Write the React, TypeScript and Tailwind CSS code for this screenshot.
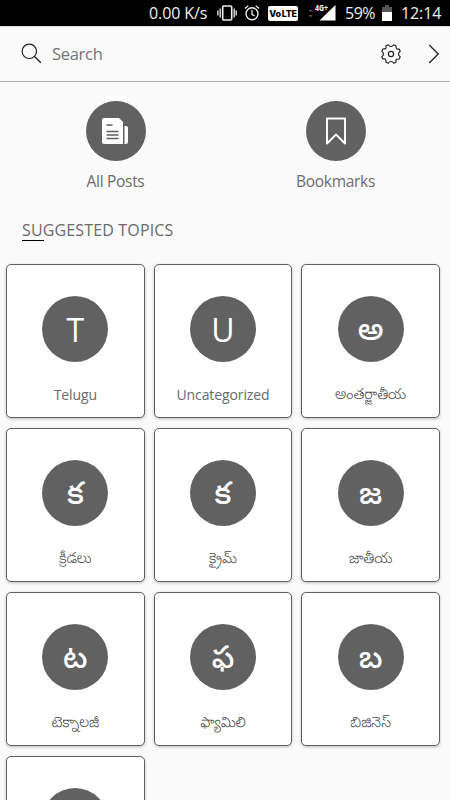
import React from "react";

const topics = [
  { letter: "T", name: "Telugu", latin: true },
  { letter: "U", name: "Uncategorized", latin: true },
  { letter: "అ", name: "అంతర్జాతీయ" },
  { letter: "క", name: "క్రీడలు" },
  { letter: "క", name: "క్రైమ్" },
  { letter: "జ", name: "జాతీయ" },
  { letter: "ట", name: "టెక్నాలజీ" },
  { letter: "ఫ", name: "ఫ్యామిలి" },
  { letter: "బ", name: "బిజినెస్" },
  { letter: "", name: "" },
];

function StatusBar() {
  return (
    <header className="flex h-[26px] shrink-0 items-center bg-black pl-[149px] text-[16px] leading-[26px] font-normal whitespace-nowrap text-[#eee]">
      <span className="w-[68px] tracking-[-0.1px]">0.00 K/s</span>
      <svg width="20" height="18" viewBox="0 0 20 18" fill="none" stroke="#eee" className="shrink-0">
        <rect x="5.7" y="2" width="9" height="14" rx="1" strokeWidth="1.6" />
        <path d="M3.2 4.5v9M.9 6.5v5M17.2 4.5v9M19.2 6.5v5" strokeWidth="1.3" />
      </svg>
      <svg width="16" height="18" viewBox="0 0 16 18" fill="none" stroke="#eee" className="ml-[7px] shrink-0">
        <circle cx="8" cy="9.8" r="6" strokeWidth="1.4" />
        <path d="M8 6v4.3l2.6 1.7M.8 4.6l3.5-2.9M15.2 4.6l-3.5-2.9" strokeWidth="1.3" />
      </svg>
      <span className="ml-[8px] flex h-[15px] w-[30px] shrink-0 items-center justify-center rounded-[2px] bg-white font-['Inter',sans-serif] text-[9px] leading-none font-extrabold tracking-[-0.3px] text-black">
        Vo<span className="ml-px">LTE</span>
      </span>
      <svg width="29" height="20" viewBox="0 0 29 20" className="ml-[10px] shrink-0">
        <path d="M.5 8.5 2.5 6l2 2.5M.5 12l2 2.5 2-2.5" fill="#555" />
        <path d="M27.5 2v15.5h-16z" fill="#fff" />
        <text x="7" y="8" fill="#fff" stroke="#000" strokeWidth="2" paintOrder="stroke" fontSize="8" fontWeight="700" fontFamily="Open Sans, sans-serif" textLength="13" lengthAdjust="spacingAndGlyphs">4G+</text>
      </svg>
      <span className="ml-[8px] w-[33px] tracking-[-0.5px]">59%</span>
      <svg width="10" height="16" viewBox="0 0 10 16" className="ml-[4px] shrink-0">
        <path d="M3 0h4v2h3v5H0V2h3z" fill="#555" />
        <path d="M0 7h10v9H0z" fill="#fff" />
      </svg>
      <span className="ml-[9px] tracking-[-0.1px]">12:14</span>
    </header>
  );
}

function Toolbar() {
  return (
    <div className="flex h-[56px] shrink-0 items-center border-t border-b border-t-[#ddd] border-b-[#aaa] pl-[21px]">
      <svg width="22" height="22" viewBox="0 0 22 22" fill="none" stroke="#222" className="shrink-0">
        <circle cx="8.3" cy="8.3" r="7.2" strokeWidth="1.2" />
        <path d="m13.3 13.3 6.5 6.5" strokeWidth="1.3" />
      </svg>
      <span className="ml-[9px] flex-1 text-[16.5px] leading-6 font-normal tracking-[-0.3px] text-[#747474]">Search</span>
      <svg width="20" height="20" viewBox="0 0 20 20" fill="none" stroke="#222" strokeWidth="1.2" strokeLinejoin="round" className="mr-[0.5px] shrink-0">
        <path d="M7.3.8 Q8.3 2.5 10 2.5 T12.7.8 L15 1.8 Q15 3.8 15.4 4.6 T18.2 5 L19.2 7.3 Q17.5 8.3 17.5 10 T19.2 12.7 L18.2 15 Q16.2 15 15.4 15.4 T15 18.2 L12.7 19.2 Q11.7 17.5 10 17.5 T7.3 19.2 L5 18.2 Q5 16.2 4.6 15.4 T1.8 15 L.8 12.7 Q2.5 11.7 2.5 10 T.8 7.3 L1.8 5 Q3.8 5 4.6 4.6 T5 1.8Z" />
        <circle cx="10" cy="10" r="2.6" />
      </svg>
      <svg width="12" height="20" viewBox="0 0 12 20" fill="none" stroke="#222" strokeWidth="1.3" className="mr-[10px] ml-[27px] shrink-0">
        <path d="m1.2 1 9 9-9 9" />
      </svg>
    </div>
  );
}

function Shortcut({ label, children }: { label: string; children: React.ReactNode }) {
  return (
    <div className="flex w-[220px] flex-col items-center">
      <div className="flex size-[60px] items-center justify-center rounded-full bg-[#616161]">{children}</div>
      <span className="mt-[8px] text-[15.5px] leading-6 font-normal tracking-[-0.3px] whitespace-nowrap text-[#6c6c6c]">{label}</span>
    </div>
  );
}

export default function App() {
  return (
    <div className="flex h-[800px] w-[450px] flex-col overflow-hidden bg-[#fafafa] font-['Open_Sans','Noto_Sans','Noto_Sans_Telugu',sans-serif] font-light">
      <StatusBar />
      <Toolbar />
      <nav className="flex shrink-0 pt-[19px] pl-[5.5px]">
        <Shortcut label="All Posts">
          <svg width="28" height="28" viewBox="0 0 28 28" fill="none" className="mr-[2px]">
            <path d="M3 1h15l4 4v22H3a2 2 0 0 1-2-2V3a2 2 0 0 1 2-2z" fill="#fff" />
            <path d="M23.5 9h1.5a2 2 0 0 1 2 2v14a2 2 0 0 1-2 2h-1.5z" fill="#fff" />
            <path d="M5.5 8h6M5.5 14.5h12M5.5 18h12M5.5 21.5h12" stroke="#616161" strokeWidth="1.3" />
          </svg>
        </Shortcut>
        <Shortcut label="Bookmarks">
          <svg width="22" height="28" viewBox="0 0 22 28" fill="none" stroke="#fff" strokeWidth="1.9" strokeLinejoin="round">
            <path d="M2 1.5h18v25l-9-9-9 9z" />
          </svg>
        </Shortcut>
      </nav>
      <div className="mt-[25px] ml-[22px] shrink-0">
        <h2 className="text-[16px] leading-6 font-normal tracking-[0.15px] whitespace-nowrap text-[#6a6a6a]">SUGGESTED TOPICS</h2>
        <div className="-mt-[2px] h-px w-[22px] bg-black" />
      </div>
      <main className="mt-[23px] ml-[6px] grid w-[434px] shrink-0 auto-rows-[154px] grid-cols-3 gap-x-[9px] gap-y-[10px]">
        {topics.map((t, i) => (
          <section
            key={i}
            className="flex flex-col items-center rounded-[5px] border border-[#606060] bg-white pt-[31.4px] shadow-[0_1px_3px_rgba(0,0,0,0.25)]"
          >
            <div className="flex size-[66px] shrink-0 items-center justify-center rounded-full bg-[#616161] text-white">
              <span className={t.latin ? "pt-[2px] text-[32px] leading-[66px] font-normal" : "pb-[2px] text-[31px] leading-[66px] font-medium"}>{t.letter}</span>
            </div>
            <span
              className={
                t.latin
                  ? "mt-[21px] text-[14px] leading-6 font-normal tracking-[-0.1px] whitespace-nowrap text-[#6a6a6a]"
                  : "mt-[20px] text-[14.5px] leading-6 whitespace-nowrap text-[#444]"
              }
            >
              {t.name}
            </span>
          </section>
        ))}
      </main>
    </div>
  );
}
